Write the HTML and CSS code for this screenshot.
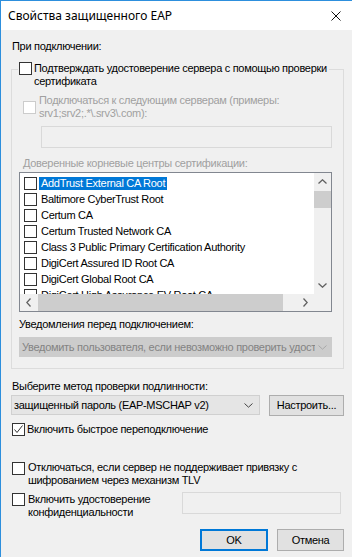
FILE: index.html
```html
<!DOCTYPE html>
<html lang="ru">
<head>
<meta charset="utf-8">
<title>Свойства защищенного EAP</title>
<link rel="stylesheet" href="styles.css">
</head>
<body>
<div class="window">
  <div class="titlebar">
    <span class="title">Свойства защищенного EAP</span>
    <svg class="close" width="10" height="10" viewBox="0 0 10 10"><path d="M0.5 0.5L9.5 9.5M9.5 0.5L0.5 9.5" stroke="#111" stroke-width="1" fill="none"/></svg>
  </div>
  <div class="content">
    <div class="label first">При подключении:</div>
    <div class="group">
      <div class="caption">
        <span class="cb"></span>
        <span class="text">Подтверждать удостоверение сервера с помощью проверки<br>сертификата</span>
      </div>
      <div class="servers">
        <span class="cb dis"></span>
        <span class="text">Подключаться к следующим серверам (примеры:<br>srv1;srv2;.*\.srv3\.com):</span>
      </div>
      <div class="servers-input"></div>
      <div class="label roots">Доверенные корневые центры сертификации:</div>
      <div class="list">
        <div class="items">
          <div class="item"><span class="cb"></span><span class="name sel">AddTrust External CA Root</span></div>
          <div class="item"><span class="cb"></span><span class="name">Baltimore CyberTrust Root</span></div>
          <div class="item"><span class="cb"></span><span class="name">Certum CA</span></div>
          <div class="item"><span class="cb"></span><span class="name">Certum Trusted Network CA</span></div>
          <div class="item"><span class="cb"></span><span class="name">Class 3 Public Primary Certification Authority</span></div>
          <div class="item"><span class="cb"></span><span class="name">DigiCert Assured ID Root CA</span></div>
          <div class="item"><span class="cb"></span><span class="name">DigiCert Global Root CA</span></div>
          <div class="item"><span class="cb"></span><span class="name">DigiCert High Assurance EV Root CA</span></div>
        </div>
        <div class="vscroll">
          <div class="sbtn"><svg width="9" height="5" viewBox="0 0 9 5"><path d="M0.5 4.5L4.5 0.8L8.5 4.5" stroke="#606060" stroke-width="1.3" fill="none"/></svg></div>
          <div class="vthumb"></div>
          <div class="spacer"></div>
          <div class="sbtn"><svg width="9" height="5" viewBox="0 0 9 5"><path d="M0.5 0.5L4.5 4.2L8.5 0.5" stroke="#606060" stroke-width="1.3" fill="none"/></svg></div>
        </div>
        <div class="hscroll">
          <div class="sbtn"><svg width="5" height="9" viewBox="0 0 5 9"><path d="M4.5 0.5L0.8 4.5L4.5 8.5" stroke="#606060" stroke-width="1.3" fill="none"/></svg></div>
          <div class="hthumb"></div>
          <div class="spacer"></div>
          <div class="sbtn"><svg width="5" height="9" viewBox="0 0 5 9"><path d="M0.5 0.5L4.2 4.5L0.5 8.5" stroke="#606060" stroke-width="1.3" fill="none"/></svg></div>
        </div>
        <div class="corner"></div>
      </div>
      <div class="label notify">Уведомления перед подключением:</div>
      <div class="combo dis">
        <span class="ctext">Уведомить пользователя, если невозможно проверить удостоверение сервера</span>
        <svg class="chev" width="9" height="5" viewBox="0 0 9 5"><path d="M0.5 0.5L4.5 4.2L8.5 0.5" stroke="#a8a8a8" stroke-width="1" fill="none"/></svg>
      </div>
    </div>
    <div class="label method">Выберите метод проверки подлинности:</div>
    <div class="method-row">
      <div class="combo main">
        <span class="ctext">защищенный пароль (EAP-MSCHAP v2)</span>
        <svg class="chev" width="9" height="5" viewBox="0 0 9 5"><path d="M0.5 0.5L4.5 4.2L8.5 0.5" stroke="#444" stroke-width="1" fill="none"/></svg>
      </div>
      <div class="button cfg">Настроить...</div>
    </div>
    <div class="check fast">
      <span class="cb"><svg width="11" height="11" viewBox="0 0 11 11"><path d="M1.5 5.5L4 8.5L9.5 1.5" stroke="#333" stroke-width="1" fill="none"/></svg></span>
      <span class="text">Включить быстрое переподключение</span>
    </div>
    <div class="check tlv">
      <span class="cb"></span>
      <span class="text">Отключаться, если сервер не поддерживает привязку с<br>шифрованием через механизм TLV</span>
    </div>
    <div class="check conf">
      <span class="cb"></span>
      <span class="text">Включить удостоверение<br>конфиденциальности</span>
      <div class="conf-input"></div>
    </div>
    <div class="buttons">
      <div class="button ok">OK</div>
      <div class="button cancel">Отмена</div>
    </div>
  </div>
</div>
</body>
</html>
```

FILE: styles.css
```css
* { box-sizing: border-box; }
html, body { margin: 0; padding: 0; }
body {
  width: 352px;
  height: 557px;
  overflow: hidden;
  background: #f0f0f0;
  font-family: "Liberation Sans", Arial, sans-serif;
  font-size: 11px;
  letter-spacing: -0.3px;
  line-height: 13px;
  color: #000;
}
.window {
  height: 557px;
  border-left: 1px solid #2d8fdd;
  border-top: 1px solid #2d8fdd;
  display: flex;
  flex-direction: column;
}
.titlebar {
  height: 29px;
  flex-shrink: 0;
  background: #fff;
  display: flex;
  align-items: center;
  justify-content: space-between;
  padding: 0 11px 0 7px;
}
.title {
  font-family: "Noto Sans", "Liberation Sans", sans-serif;
  font-size: 12px;
  letter-spacing: 0;
  line-height: 16px;
}
.content {
  padding: 0 8px 0 10px;
  display: flex;
  flex-direction: column;
}
.label { padding-left: 1px; white-space: nowrap; }
.first { margin-top: 10px; }
.cb {
  width: 13px;
  height: 13px;
  flex-shrink: 0;
  border: 1px solid #333;
  background: #fff;
  display: flex;
  align-items: center;
  justify-content: center;
}
.cb.dis { border-color: #cccccc; background: #fff; }
.text { white-space: nowrap; }
.group {
  margin-top: 16px;
  border: 1px solid #dcdcdc;
  padding: 0 11px 11px 7px;
  display: flex;
  flex-direction: column;
}
.caption {
  margin-top: -8px;
  margin-left: -1px;
  padding: 0 2px 0 1px;
  width: fit-content;
  background: #f0f0f0;
  display: flex;
  align-items: flex-start;
  gap: 2px;
}
.servers {
  margin-top: 6px;
  margin-left: 4px;
  display: flex;
  align-items: center;
  gap: 3px;
  color: #a0a0a0;
}
.servers-input {
  margin-top: 6px;
  margin-left: 22px;
  height: 22px;
  border: 1px solid #d9d9d9;
  background: #f0f0f0;
}
.roots { margin-top: 9px; margin-left: 3px; color: #a0a0a0; }
.list {
  margin-top: 2px;
  height: 140px;
  border: 1px solid #828790;
  background: #fff;
  display: grid;
  grid-template-columns: 1fr 17px;
  grid-template-rows: 1fr 17px;
}
.items { overflow: hidden; padding-top: 2px; }
.item {
  height: 16px;
  display: flex;
  align-items: center;
  padding-left: 4px;
  gap: 2px;
  white-space: nowrap;
}
.name { padding: 0 2px; line-height: 13px; }
.name.sel { background: #0078d7; color: #fff; }
.vscroll, .hscroll, .corner { background: #f0f0f0; }
.vscroll { display: flex; flex-direction: column; }
.hscroll { display: flex; }
.sbtn {
  width: 17px;
  height: 17px;
  flex-shrink: 0;
  display: flex;
  align-items: center;
  justify-content: center;
}
.spacer { flex: 1; }
.vthumb { margin-top: 1px; height: 17px; background: #cdcdcd; }
.hthumb { margin-left: 1px; width: 245px; background: #cdcdcd; }
.notify { margin-top: 6px; padding-left: 0; }
.combo {
  height: 20px;
  display: flex;
  align-items: center;
  padding: 0 6px 0 2px;
  gap: 5px;
}
.combo .ctext { flex: 1; overflow: hidden; white-space: nowrap; }
.combo .chev { flex-shrink: 0; }
.combo.dis {
  margin-top: 6px;
  padding-right: 4px;
  gap: 3px;
  background: #cccccc;
  border: 1px solid #cccccc;
  color: #838383;
}
.method { margin-top: 11px; }
.method-row {
  margin-top: 2px;
  display: flex;
  align-items: flex-start;
  gap: 9px;
}
.combo.main {
  width: 249px;
  background: #e5e5e5;
  border: 1px solid #d0d0d0;
}
.button {
  height: 22px;
  display: flex;
  align-items: center;
  justify-content: center;
  background: #e1e1e1;
  border: 1px solid #adadad;
  white-space: nowrap;
}
.cfg { width: 75px; height: 21px; }
.check {
  display: flex;
  align-items: flex-start;
  gap: 3px;
  padding-left: 1px;
}
.fast { margin-top: 7px; gap: 2px; }
.tlv { margin-top: 25px; }
.tlv .cb { margin-top: 1px; }
.conf { margin-top: 6px; }
.conf-input {
  margin-left: auto;
  margin-right: 3px;
  margin-top: -1px;
  width: 159px;
  height: 22px;
  border: 1px solid #d9d9d9;
  background: #f0f0f0;
}
.buttons {
  margin-top: 10px;
  display: flex;
  justify-content: flex-end;
  gap: 9px;
}
.ok { width: 68px; border: 2px solid #0078d7; }
.cancel { width: 67px; }
```
